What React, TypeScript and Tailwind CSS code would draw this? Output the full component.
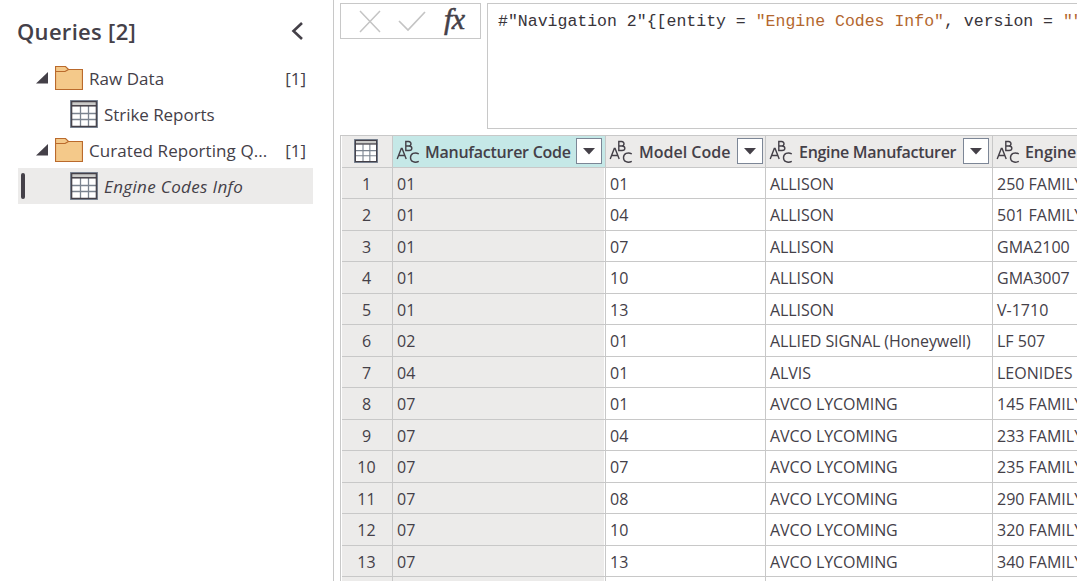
import React from "react";

const SANS = "font-['Open_Sans','Noto_Sans',sans-serif]";

function TableIcon({ className }: { className: string }) {
  return (
    <svg className={className} viewBox="0 0 28 28" preserveAspectRatio="none" fill="none">
      <rect x="1" y="1" width="26" height="26" fill="#fff" />
      <rect x="1" y="1" width="26" height="5" fill="#cbcbc9" />
      <path d="M10.5 6v20M18.500 6v20M2 13.500h24M2 19.500h24" stroke="#7b8490" strokeWidth="1.300" />
      <rect x="1" y="1" width="26" height="26" stroke="#6b7686" strokeWidth="1.800" />
      <path d="M1 5.800h26" stroke="#444048" strokeWidth="1.500" />
      <path d="M1.700 1.700h24.600v24.600H1.700z" stroke="#444048" strokeWidth="1.200" />
    </svg>
  );
}

function FolderIcon() {
  return (
    <svg className="h-[26px] w-[28px] shrink-0" viewBox="0 0 28 26">
      <path d="M.5 24.500V1.500H10.500L13.500 4.500H27.500v20z" fill="#f4c98a" stroke="#ba6a2c" strokeWidth="1.200" />
      <path d="M.5 6.500H10l3.500-2" fill="none" stroke="#ba6a2c" strokeWidth="1.200" />
    </svg>
  );
}

function AbcIcon() {
  return (
    <svg className="h-6 w-6 shrink-0" viewBox="0 0 24 24" fill="none" stroke="#444048" strokeWidth="1.4">
      <path d="M1.200 19 5.300 8.500h.8L10.200 19M2.800 15.500h5.900" />
      <path d="M9.800 1.500v9h3.200c3.800 0 3.800-4.500 0-4.500H9.800h2.800c3.200 0 3.200-4.500 0-4.500z" />
      <path d="M22.800 13.800c-4.200-2-8.300-.2-8.300 3.900 0 3.900 4.100 5.600 8.300 3.600" />
    </svg>
  );
}

function Group({ name, track }: { name: string; track: string }) {
  return (
    <div className="flex h-9 items-center pl-[18px] pr-[7px]">
      <svg className="h-3 w-3 shrink-0" viewBox="0 0 12 12">
        <path d="M12 0v11.500H0z" fill="#444048" />
      </svg>
      <div className="ml-[7px] flex">
        <FolderIcon />
      </div>
      <span className={`ml-[6px] whitespace-nowrap pt-px ${track}`}>{name}</span>
      <span className="ml-auto pt-px">[1]</span>
    </div>
  );
}

function HeaderCell({ width, label, track, first, last, pad }: { width: string; label: string; track: string; first?: boolean; last?: boolean; pad: string }) {
  return (
    <div className={`flex h-full shrink-0 items-center border-r border-[#c8c8c8] pl-[3px] ${pad} ${width} ${first ? "bg-[#c5e8e7]" : "bg-[#ecebea]"}`}>
      <AbcIcon />
      <span className={`whitespace-nowrap text-[16px] font-semibold ${track}`}>{label}</span>
      {!last && (
        <span className="mb-px ml-auto flex h-[26px] w-[26px] items-center justify-center border border-[#7c8696] bg-white">
          <svg className="h-[7px] w-3" viewBox="0 0 12 7">
            <path d="M0 0h12L6 6.500z" fill="#444048" />
          </svg>
        </span>
      )}
    </div>
  );
}

const rows: [string, string, string, string][] = [
  ["01", "01", "ALLISON", "250 FAMILY"],
  ["01", "04", "ALLISON", "501 FAMILY"],
  ["01", "07", "ALLISON", "GMA2100"],
  ["01", "10", "ALLISON", "GMA3007"],
  ["01", "13", "ALLISON", "V-1710"],
  ["02", "01", "ALLIED SIGNAL (Honeywell)", "LF 507"],
  ["04", "01", "ALVIS", "LEONIDES"],
  ["07", "01", "AVCO LYCOMING", "145 FAMILY"],
  ["07", "04", "AVCO LYCOMING", "233 FAMILY"],
  ["07", "07", "AVCO LYCOMING", "235 FAMILY"],
  ["07", "08", "AVCO LYCOMING", "290 FAMILY"],
  ["07", "10", "AVCO LYCOMING", "320 FAMILY"],
  ["07", "13", "AVCO LYCOMING", "340 FAMILY"],
];

const cell = "flex h-full shrink-0 items-center whitespace-nowrap border-r border-[#c8c8c8] pl-[4px]";

export default function App() {
  return (
    <div className={`flex h-[581px] w-[1077px] overflow-hidden bg-white text-[#444048] ${SANS}`}>
      <aside className="flex w-[334px] shrink-0 flex-col border-r border-[#c8c8c8] pl-[18px] pr-5 text-[17px]">
        <div className="flex h-[60px] items-center justify-between pr-[10px] pt-[2px]">
          <h1 className="ml-[-1px] text-[22px] font-semibold tracking-[0.3px]">Queries [2]</h1>
          <svg className="mb-px h-[18px] w-3" viewBox="0 0 12 18" fill="none">
            <path d="M11 1 2.500 9 11 17" stroke="#444048" strokeWidth="2.600" />
          </svg>
        </div>
        <Group name="Raw Data" track="tracking-[0.05px]" />
        <div className="flex h-9 items-center pl-[52px]">
          <TableIcon className="h-7 w-7 shrink-0" />
          <span className="ml-[6px] pt-px tracking-[-0.05px]">Strike Reports</span>
        </div>
        <Group name="Curated Reporting Q..." track="tracking-[0.08px]" />
        <div className="flex h-9 items-center bg-[#ecebea] pl-[3px]">
          <span className="h-[26px] w-1 rounded-full bg-[#444048]" />
          <TableIcon className="ml-[45px] h-7 w-7 shrink-0" />
          <span className="ml-[6px] pt-px italic tracking-[0.35px]">Engine Codes Info</span>
        </div>
      </aside>

      <main className="flex min-w-0 flex-1 flex-col pl-[6px] pt-[3px]">
        <div className="flex h-[126px] items-start">
          <div className="flex h-9 w-[141px] shrink-0 items-start border border-[#c8c8c8]">
            <svg className="ml-[17px] mt-[5px] h-[24px] w-[24px]" viewBox="0 0 24 24" fill="none" stroke="#c4c4c4" strokeWidth="1.500">
              <path d="M2 2l20 21M22 2 2 23" />
            </svg>
            <svg className="ml-[16px] mt-[6px] h-[22px] w-[28px]" viewBox="0 0 28 22" fill="none" stroke="#c4c4c4" strokeWidth="1.700">
              <path d="M1 11l9 9L27 2" />
            </svg>
            <span className="ml-[18px] mt-[-2px] [font-family:'Liberation_Serif',serif] text-[30px] italic leading-[34px] tracking-[-0.5px] [-webkit-text-stroke:0.5px_#444048]">fx</span>
          </div>
          <div className="ml-[6px] h-[126px] min-w-0 flex-1 overflow-hidden whitespace-pre border border-r-0 border-[#c8c8c8] pl-[10px] pt-[6px] font-['Liberation_Mono',monospace] text-[16.530px] leading-[24px] text-[#38343a]">
            {'#"Navigation 2"{[entity = '}
            <span className="text-[#b3672e]">"Engine Codes Info"</span>
            {", version = "}
            <span className="text-[#b3672e]">""</span>
          </div>
        </div>

        <div className="mt-[6px] flex min-h-0 flex-1 flex-col overflow-hidden border-l border-t border-[#c8c8c8] pl-px text-[16px]">
          <div className="flex h-8 shrink-0 border-b border-[#c8c8c8]">
            <div className="flex h-full w-[51px] shrink-0 items-start justify-center border-r border-[#c8c8c8] bg-[#ecebea] pr-[2px] pt-[3px]">
              <TableIcon className="h-6 w-6" />
            </div>
            <HeaderCell width="w-[213px]" label="Manufacturer Code" track="ml-[5px] tracking-[-0.26px]" pad="pr-[3px]" first />
            <HeaderCell width="w-[160px]" label="Model Code" track="ml-[6px] tracking-[0px]" pad="pr-[2px]" />
            <HeaderCell width="w-[227px]" label="Engine Manufacturer" track="ml-[6px] tracking-[-0.3px]" pad="pr-[3px]" />
            <HeaderCell width="w-[227px]" label="Engine Model" track="ml-[5px] tracking-[-0.1px]" pad="pr-[2px]" last />
          </div>
          {rows.map((r, i) => (
            <div key={i} className={`flex shrink-0 border-b border-[#c8c8c8] ${i % 2 ? "h-8" : "h-[31px] [&>div]:pt-[2px]"}`}>
              <div className="flex h-full w-[51px] shrink-0 items-center justify-center border-r border-[#c8c8c8] bg-[#ecebea] pr-px">{i + 1}</div>
              <div className={`w-[213px] bg-[#ecebea] shadow-[inset_-1px_0_0_#fff] ${cell}`}>{r[0]}</div>
              <div className={`w-[160px] ${cell}`}>{r[1]}</div>
              <div className={`w-[227px] tracking-[-0.08px] ${cell}`}>{r[2]}</div>
              <div className={`w-[227px] ${cell}`}>{r[3]}</div>
            </div>
          ))}
          <div className="flex h-8 shrink-0">
            <div className="w-[51px] shrink-0 border-r border-[#c8c8c8] bg-[#ecebea]" />
            <div className={`w-[213px] bg-[#ecebea] shadow-[inset_-1px_0_0_#fff] ${cell}`} />
            <div className={`w-[160px] ${cell}`} />
            <div className={`w-[227px] ${cell}`} />
          </div>
        </div>
      </main>
    </div>
  );
}
